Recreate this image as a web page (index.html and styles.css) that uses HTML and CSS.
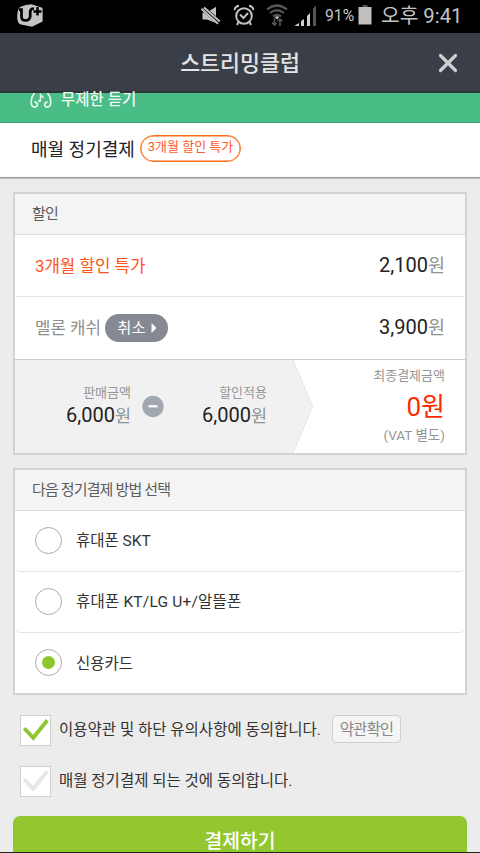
FILE: index.html
```html
<!DOCTYPE html>
<html lang="ko">
<head>
<meta charset="utf-8">
<meta name="viewport" content="width=device-width">
<title>스트리밍클럽</title>
<link rel="stylesheet" href="styles.css">
</head>
<body>
<div class="screen">
  <div class="status">
    <svg class="carrier" width="28" height="24" viewBox="0 0 28 24"><path d="M4 3Q10 .4 15.500 .2L25.500 3.500Q26.600 4 26.600 5.500V17.500L16 22.800 5 20.500Q1.500 19.500 1.200 14 1 5.500 4 3Z" fill="#c4c4c4"/><path d="M3 5.700H5.500V12.500Q5.500 16.500 9.500 16.500T14.200 12.500V8Q14.200 4.500 18 4.500" fill="none" stroke="#000" stroke-width="2.700"/><path d="M21.500 3V11.500M17.500 7.500H25.500" stroke="#000" stroke-width="2.500"/></svg>
    <svg class="mute" width="20" height="20" viewBox="0 0 20 20"><path d="M1.500 6.500H6L15 .8V17L6 13.500H1.500Z" fill="#c0c0c0"/><path d="M1 1.500L19 17" stroke="#000" stroke-width="5"/><path d="M.5 2.800L17 17.800M3 1.500L18.800 15.500" stroke="#c0c0c0" stroke-width="1.900"/></svg>
    <svg class="alarm" width="22" height="22" viewBox="0 0 22 22" fill="none" stroke="#c0c0c0" stroke-width="2"><circle cx="11" cy="12" r="7.800"/><path d="M7 10.500L10.500 14 15 9M1.500 6Q2 2.500 6 1.800M20.500 6Q20 2.500 16 1.800M5.500 18L4 21M16.500 18L18 21"/></svg>
    <svg class="wifi" width="22" height="23" viewBox="0 0 22 23" fill="none" stroke="#555" stroke-width="2.200"><path d="M1 5.500Q11-2.500 21 5.500M4 9Q11 3.500 18 9M7 12.300Q11 9.300 15 12.300"/><path d="M8.800 13L11 15.500 13.200 13Q11 11.500 8.800 13Z" fill="#ccc" stroke="none"/><path d="M8.500 14V21M6 18.500L8.500 21 10.500 19M14 22V15M11.800 17L14 15 16.300 17.300" stroke-width="1.600"/></svg>
    <svg class="signal" width="23" height="22" viewBox="0 0 23 22"><path d="M1 20.500L5 18V21H1ZM7 16L10 14V21H7ZM13 11L16 8V21H13Z" fill="#d0d0d0"/><path d="M19 3.500L22 .5V21H19Z" fill="#555"/></svg>
    <span class="percent">91%</span>
    <svg class="battery" width="14" height="20" viewBox="0 0 14 20"><path d="M4.500 0H9.500V2H4.500Z" fill="#555"/><path d="M.5 2H13.500V19.500H.5Z" fill="#c0c0c0"/></svg>
    <span class="clock">오후 9:41</span>
  </div>
  <header class="titlebar">
    <h1>스트리밍클럽</h1>
    <svg class="close" width="20" height="20" viewBox="0 0 20 20"><path d="M2.500 2.500L17.500 17.500M17.500 2.500L2.500 17.500" stroke="#cfcfcf" stroke-width="3.200" stroke-linecap="round"/></svg>
  </header>
  <div class="banner">
    <svg width="22" height="16" viewBox="0 0 22 16" fill="none" stroke="#e6f7ee" stroke-width="1.700"><path d="M4.500 0Q1 4 1.200 9 1.200 14 5 14.200 8 13.500 7.200 10.500L4.500 8.500M17.500 0Q21 4 20.800 9 20.800 14 17 14.200 14 13.500 14.800 10.500L17.500 8.500"/><path d="M10.500 8.500V1.500L13.500 5" stroke-width="1.400"/><circle cx="9.500" cy="8" r="1" fill="#e6f7ee" stroke-width="1"/></svg>
    <span>무제한 듣기</span>
  </div>
  <div class="plan"><span class="plan-name">매월 정기결제</span><span class="badge">3개월 할인 특가</span></div>

  <main>
    <section class="card">
      <h2>할인</h2>
      <div class="row"><span class="promo">3개월 할인 특가</span><span class="price">2,100<i>원</i></span></div>
      <div class="row cash"><span class="muted">멜론 캐쉬</span><button class="cancel">취소<svg width="6" height="10" viewBox="0 0 6 10"><path d="M.5 0L5.500 5 .5 10Z" fill="#fff"/></svg></button><span class="price">3,900<i>원</i></span></div>
      <div class="summary">
        <div class="amount first"><small>판매금액</small><span class="price">6,000<i>원</i></span></div>
        <svg class="minus" width="22" height="22" viewBox="0 0 22 22"><circle cx="11" cy="11" r="10.700" fill="#a2a8b1"/><path d="M6.500 10.800H15.500" stroke="#fff" stroke-width="2.200"/></svg>
        <div class="amount second"><small>할인적용</small><span class="price">6,000<i>원</i></span></div>
        <svg class="arrow" width="21" height="93" viewBox="0 0 21 93"><path d="M0 0L19.500 46.500 0 93Z" fill="#f1f1f1"/><path d="M0 0L19.500 46.500 0 93" fill="none" stroke="#e4e4e4"/></svg>
        <div class="final"><small>최종결제금액</small><strong>0원</strong><em>(VAT 별도)</em></div>
      </div>
    </section>

    <section class="card methods">
      <h2>다음 정기결제 방법 선택</h2>
      <label class="option"><span class="radio"></span><span class="name">휴대폰 SKT</span></label>
      <label class="option"><span class="radio"></span><span class="name wide">휴대폰 KT/LG U+/알뜰폰</span></label>
      <label class="option"><span class="radio on"></span><span class="name">신용카드</span></label>
    </section>

    <div class="agree">
      <span class="box"><svg width="29" height="29" viewBox="0 0 29 29"><path d="M3.200 12.300L12.300 21.800 26.300 4.200" fill="none" stroke="#8fc62e" stroke-width="3.800"/></svg></span>
      <span class="agree-text">이용약관 및 하단 유의사항에 동의합니다.</span>
      <button class="terms">약관확인</button>
    </div>
    <div class="agree">
      <span class="box"><svg width="29" height="29" viewBox="0 0 29 29"><path d="M3.200 12.300L12.300 21.800 26.300 4.200" fill="none" stroke="#e4e6e9" stroke-width="3.800"/></svg></span>
      <span class="agree-text">매월 정기결제 되는 것에 동의합니다.</span>
    </div>
    <button class="pay">결제하기</button>
  </main>
</div>
</body>
</html>
```
FILE: styles.css
```css
* { box-sizing: border-box; }
body { margin: 0; font-family: Roboto, "Noto Sans CJK KR", sans-serif; color: #333; background: #ececec; }
h1, h2 { margin: 0; font-weight: 400; }
i, em { font-style: normal; }
button { border: 0; padding: 0; font: inherit; }
svg { display: block; flex: none; }
span, small, strong, em, label { white-space: nowrap; }
.screen { width: 480px; height: 853px; overflow: hidden; display: flex; flex-direction: column; border-bottom: 1px solid #222; }

.status { height: 33px; flex: none; background: #000; display: flex; align-items: flex-start; color: #c4c4c4; }
.carrier { margin: 4px 0 0 16px; }
.mute { margin: 6px 0 0 157px; }
.alarm { margin: 4px 0 0 12px; }
.wifi { margin: 4px 0 0 11px; }
.signal { margin: 5px 0 0 6px; }
.percent { width: 30px; margin: 4px 0 0 8px; font-size: 15.700px; line-height: 24px; }
.battery { margin: 5px 0 0 3px; }
.clock { margin: 1px 0 0 9px; font-size: 20.300px; line-height: 30px; }

.titlebar { height: 60px; flex: none; background: #3a3f47; border-bottom: 2px solid #2e3539; display: grid; grid-template-columns: 1fr auto 1fr; align-items: center; color: #e4e4e4; }
.titlebar h1 { grid-column: 2; font-size: 21.700px; line-height: 30px; padding-top: 4px; font-weight: 500; }
.close { justify-self: end; margin: 2px 22px 0 0; }

.banner { height: 30px; flex: none; background: #4abc86; border-bottom: 1px solid #37a56f; display: flex; align-items: flex-start; gap: 9px; padding-left: 30px; color: #effaf4; font-size: 15.500px; line-height: 24px; font-weight: 500; }
.banner span { margin-top: -5px; }

.plan { height: 55px; flex: none; background: #fff; border-bottom: 1px solid #979797; box-shadow: 0 1px 1px #c8c8c8; display: flex; align-items: center; padding-left: 31px; }
.plan-name { width: 109px; font-size: 18px; line-height: 26px; color: #222; }
.badge { width: 101px; height: 27px; border: 1.500px solid #ff6a18; box-shadow: inset 0 0 0 .5px #ff6a18; border-radius: 14px; margin-bottom: 4px; text-align: center; font-size: 13px; line-height: 22px; color: #ff5a2a; }

main { padding: 14px 13px 0; flex: none; }
.card { border: 2px solid #d3d3d3; background: #fff; height: 263px; }
.card h2 { height: 41px; background: #f4f4f4; border-bottom: 1px solid #ddd; padding-left: 17px; font-size: 15px; line-height: 41px; letter-spacing: -.85px; color: #5c5c5c; }
.row { height: 62px; border-bottom: 1px solid #e6e6e6; display: flex; align-items: center; padding: 0 20px; }
.row.cash { height: 63px; border-bottom: 1px solid #ccc; }
.promo, .muted { font-size: 16.800px; padding-bottom: 2px; }
.promo { color: #ff5321; }
.muted { color: #8f8f8f; }
.cancel { width: 63px; height: 28px; margin-left: 4px; border-radius: 14px; background: #868991; color: #fff; display: flex; align-items: center; justify-content: center; gap: 5px; padding-left: 1px; font-size: 15.300px; line-height: 26px; }
.price { font-size: 20px; line-height: 24px; color: #222; }
.price i { font-size: 18.500px; color: #929292; }
.row .price { margin-left: auto; padding-bottom: 1px; }

.summary { height: 93px; background: #fff; display: flex; align-items: flex-start; }
.amount { height: 93px; background: #f1f1f1; text-align: right; padding-top: 23px; display: flex; flex-direction: column; gap: 1px; }
.amount small, .final small { font-size: 13px; line-height: 19px; color: #959595; }
.amount .price i { color: #8d959b; font-size: 17.500px; }
.first { width: 116px; }
.minus { width: 37px; height: 93px; background: #f1f1f1; padding: 0 4px 0 11px; }
.second { width: 125px; padding-right: 26px; }
.final { margin-left: auto; padding: 6px 20px 0 0; display: flex; flex-direction: column; align-items: flex-end; }
.final strong { font-weight: 400; font-size: 26px; line-height: 32px; margin-top: 6px; color: #ff2b00; }
.final em { font-size: 13.500px; line-height: 20px; margin-top: 2px; color: #959595; }

.methods { margin-top: 13px; height: 227px; }
.option { height: 61px; border-bottom: 1px solid #e6e6e6; border-radius: 5px; display: flex; align-items: center; padding: 0 0 2px 20px; gap: 14px; font-size: 15.500px; color: #333; }
.option:last-child { border: 0; }
.name { padding-bottom: 2px; }
.wide { letter-spacing: .2px; }
.radio { width: 27px; height: 27px; border: 1px solid #aaa; border-radius: 50%; display: grid; place-items: center; }
.radio.on::after { content: ""; width: 13px; height: 13px; border-radius: 50%; background: #8fc62e; }

.agree { height: 31px; margin: 20px 0 0 7px; display: flex; align-items: flex-start; }
.box { width: 31px; height: 31px; border: 1px solid #d0d0d0; background: #fff; flex: none; }
.agree-text { margin-left: 8px; font-size: 15.500px; line-height: 30px; }
.terms { width: 69px; height: 28px; margin-left: 11px; border: 1px solid #cfcfcf; border-radius: 4px; background: #f5f5f5; color: #888; font-size: 15.500px; line-height: 28px; letter-spacing: -.9px; }
.pay { display: block; width: 454px; height: 50px; margin-top: 19px; border-radius: 7px; background: #92c730; color: #fff; font-size: 19.300px; line-height: 51px; font-weight: 500; }
```
